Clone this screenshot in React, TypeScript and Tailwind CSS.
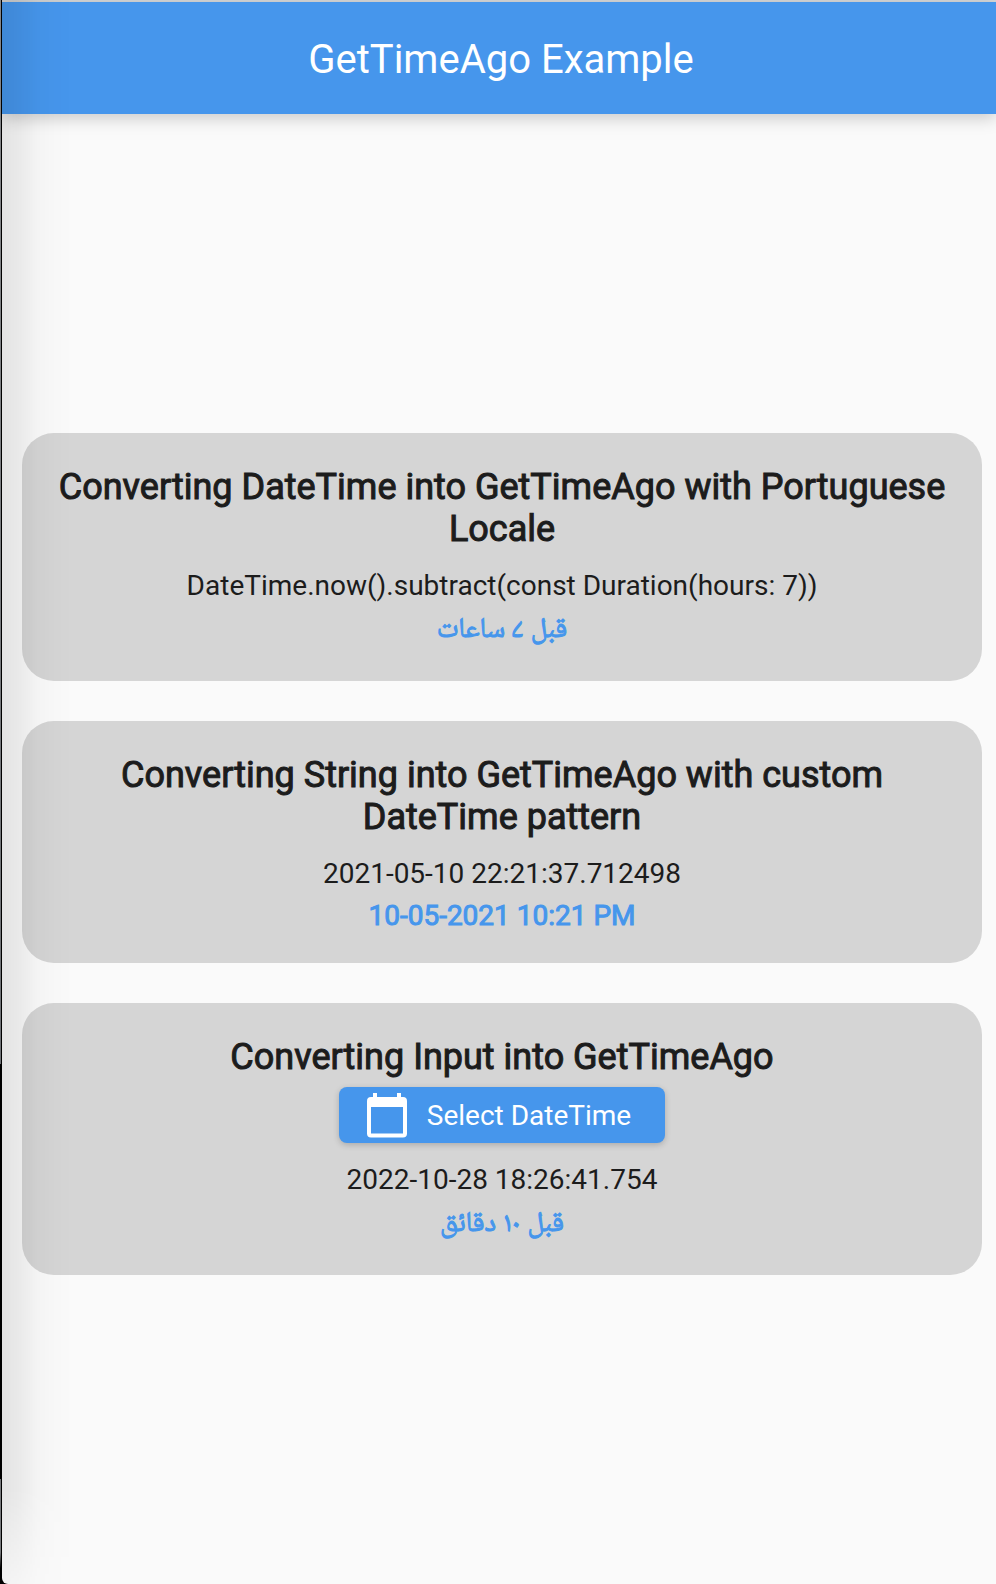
import type { ReactNode } from 'react';

const titleClass =
  'text-[36px] leading-[42px] text-[#1c1c1c] [-webkit-text-stroke:1px_#1c1c1c]';
const bodyClass = 'text-[28px] leading-8 text-[#1c1c1c]';
const resultClass =
  'text-[28px] leading-8 text-[#4696ec] [-webkit-text-stroke:1px_#4696ec]';
const arabicClass =
  "font-[Roboto,'Noto_Naskh_Arabic_UI','Noto_Naskh_Arabic','Noto_Sans_Arabic_UI','Noto_Sans_Arabic',sans-serif] text-[28px] font-normal leading-9 text-[#4696ec] [-webkit-text-stroke:1px_#4696ec]";

function Card({ title, children }: { title: string; children: ReactNode }) {
  return (
    <section className="flex flex-col items-center rounded-[32px] bg-[#d5d5d5] px-8 pt-[33px] pb-[31px] text-center">
      <h2 className={titleClass}>{title}</h2>
      {children}
    </section>
  );
}

function CalendarIcon() {
  return (
    <svg viewBox="0 0 40 45" className="h-[45px] w-10" fill="#fff" aria-hidden="true">
      <path
        fillRule="evenodd"
        d="M6 0h4v4h20V0h4v4h2a4 4 0 0 1 4 4v32.500a4 4 0 0 1-4 4H4a4 4 0 0 1-4-4V8a4 4 0 0 1 4-4h2zM4 14v26.500h32V14z"
      />
    </svg>
  );
}

export default function App() {
  return (
    <div className="flex min-h-screen bg-black font-[Roboto,sans-serif]">
      <div className="w-px bg-[linear-gradient(to_bottom,#85878a_0%,#6f7276_67.2%,#000_67.2%,#000_93.4%,#77797c_93.4%,#77797c_98%,#000_99%)]" />
      <div className="relative ml-px flex min-w-0 flex-1 flex-col overflow-hidden rounded-bl-[6px] bg-[#fafafa]">
        <div className="h-0.5 bg-[#d6d8da]" />
        <header className="flex h-28 items-center justify-center bg-[#4696ec] pt-1 pl-1 shadow-[0_4px_16px_rgba(0,0,0,0.2)]">
          <h1 className="text-[40px] leading-[48px] text-white">GetTimeAgo Example</h1>
        </header>
        <main className="flex flex-1 flex-col justify-center gap-10 pt-2.5 pr-[14px] pl-5">
          <Card title="Converting DateTime into GetTimeAgo with Portuguese Locale">
            <p className={`mt-5 ${bodyClass}`}>DateTime.now().subtract(const Duration(hours: 7))</p>
            <p lang="ur" dir="rtl" className={`mt-3 h-9 ${arabicClass}`}>قبل ۷ ساعات</p>
          </Card>
          <Card title="Converting String into GetTimeAgo with custom DateTime pattern">
            <p className={`mt-5 ${bodyClass}`}>2021-05-10 22:21:37.712498</p>
            <p className={`mt-2.5 ${resultClass}`}>10-05-2021 10:21 PM</p>
          </Card>
          <Card title="Converting Input into GetTimeAgo">
            <button
              type="button"
              className="mt-[9px] flex h-14 items-center gap-5 rounded-lg bg-[#4696ec] pr-[34px] pl-7 text-[28px] leading-8 text-white shadow-[0_2px_6px_rgba(0,0,0,0.2)]"
            >
              <CalendarIcon />
              <span className="pt-0.5">Select DateTime</span>
            </button>
            <p className={`mt-[21px] ${bodyClass}`}>2022-10-28 18:26:41.754</p>
            <p lang="ar" dir="rtl" className={`mt-3 h-9 ${arabicClass}`}>قبل ١٠ دقائق</p>
          </Card>
        </main>
        <div className="pointer-events-none absolute inset-y-0 left-0 w-[72px] bg-[linear-gradient(to_right,rgba(0,0,0,0.09),rgba(0,0,0,0.065)_22%,rgba(0,0,0,0.025)_50%,rgba(0,0,0,0.008)_75%,transparent)] [mask-image:linear-gradient(to_top,rgba(0,0,0,0.3),black_96px)]" />
      </div>
    </div>
  );
}
